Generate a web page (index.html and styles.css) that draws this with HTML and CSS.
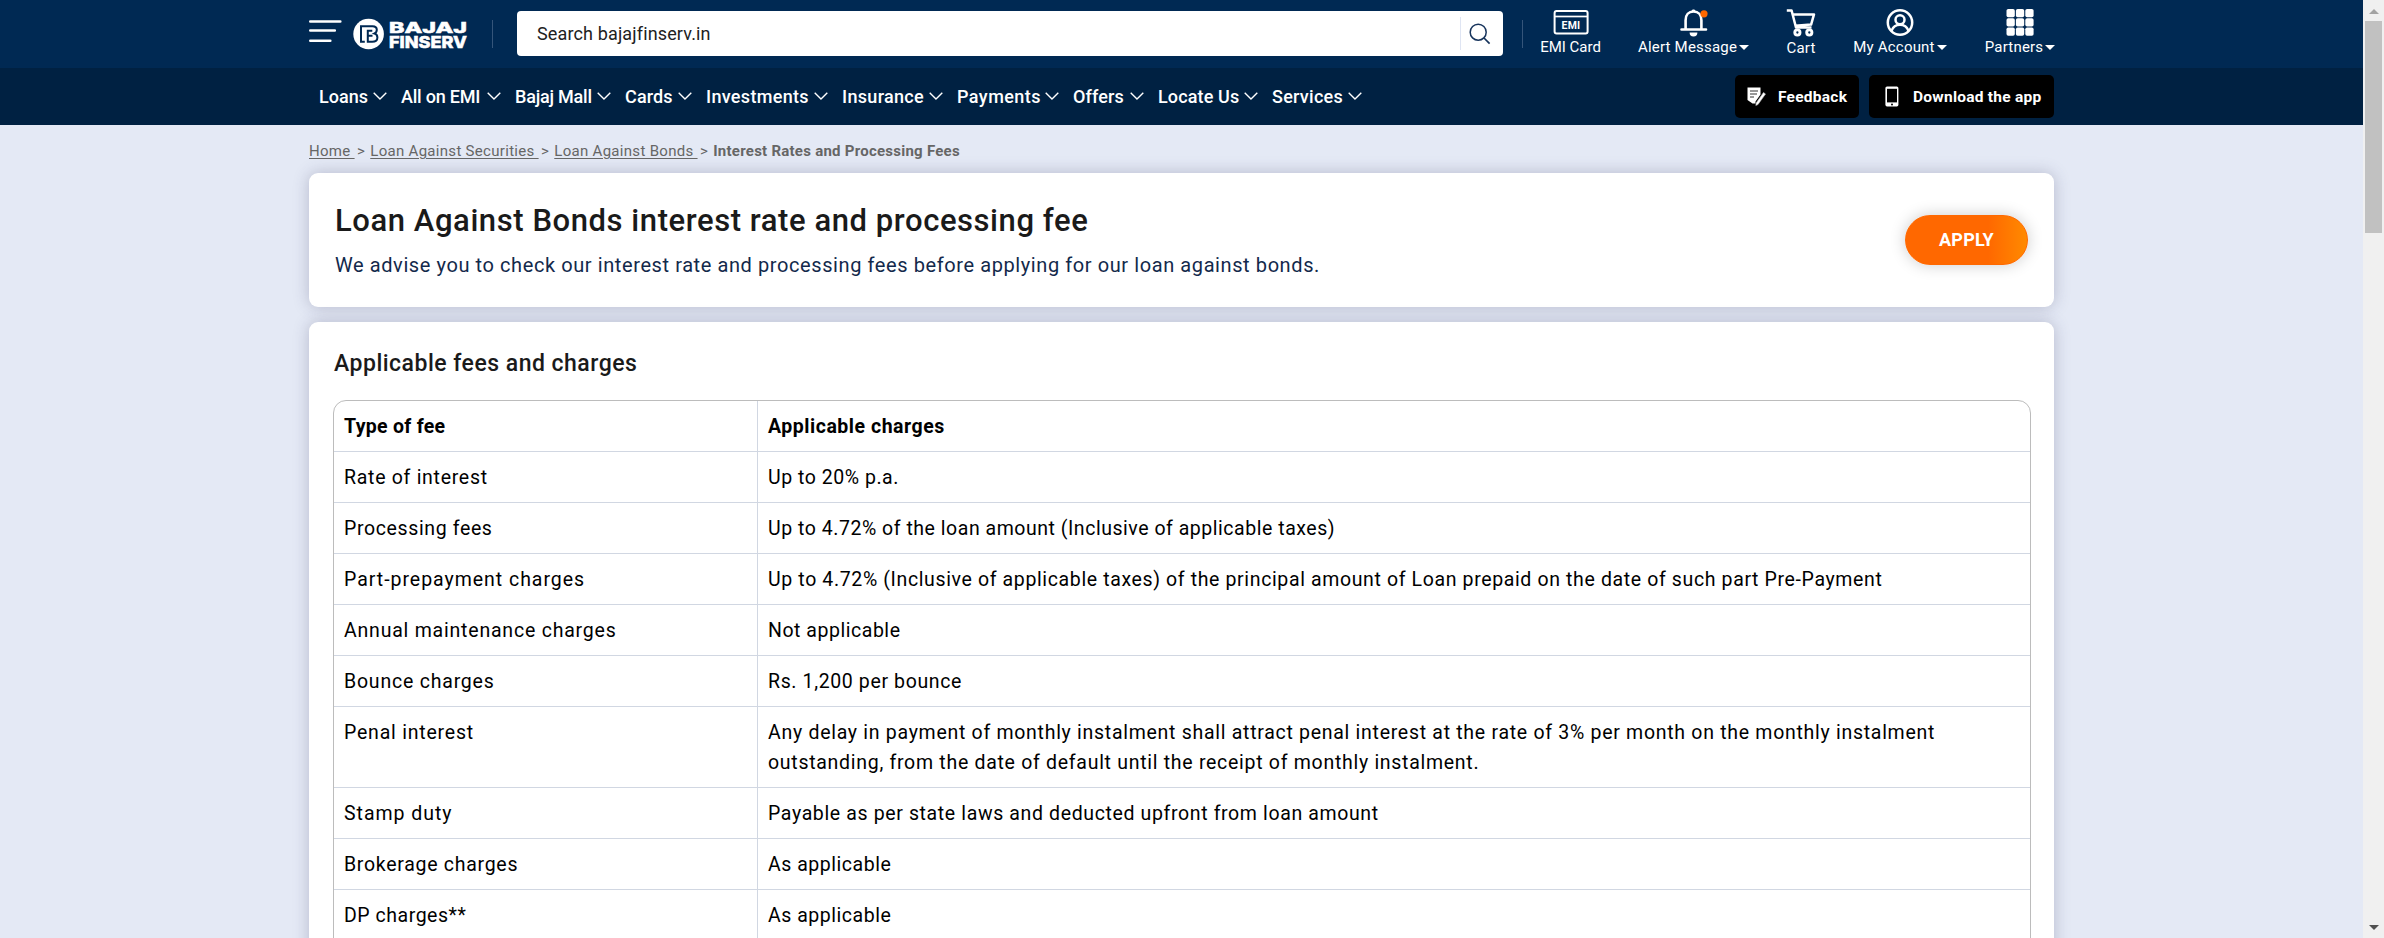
FILE: index.html
```
<!DOCTYPE html>
<html lang="en">
<head>
<meta charset="utf-8">
<title>Loan Against Bonds interest rate and processing fee</title>
<link rel="stylesheet" href="styles.css">
</head>
<body>
<svg width="0" height="0" class="defs"><symbol id="chev" viewBox="0 0 14 8"><path d="M.7.8 7 7 13.3.8" fill="none" stroke="#fff" stroke-width="1.4"/></symbol></svg>
<div class="page">
  <header class="top">
    <div class="wrap top-row">
      <svg class="burger" width="33" height="23" viewBox="0 0 33 23"><path d="M1.3 1.5h30M1.3 10.5h24.5M1.3 20.7h20" stroke="#fff" stroke-width="2.6" stroke-linecap="round"/></svg>
      <svg class="logo" width="116" height="34" viewBox="0 0 116 34">
        <circle cx="15.6" cy="17" r="15.3" fill="#fff"/>
        <path d="M11.800 24.800H8V9.200h11.500c3 0 4.300 1.300 4.300 3.500 0 2-1 3.200-2.300 3.800 1.700.5 2.900 1.900 2.900 4 0 2.800-1.800 4.300-5.200 4.300h-4.400V13.800h4.500M15 18.800h4.500" fill="none" stroke="#002953" stroke-width="2"/>
        <text class="logo-a" x="36" y="15.500" textLength="78" lengthAdjust="spacingAndGlyphs">BAJAJ</text>
        <text class="logo-b" x="36" y="31" textLength="78" lengthAdjust="spacingAndGlyphs">FINSERV</text>
      </svg>
      <i class="rule"></i>
      <div class="search"><span>Search bajajfinserv.in</span><i></i>
        <svg width="22" height="22" viewBox="0 0 22 22"><circle cx="9.200" cy="9.200" r="8" fill="none" stroke="#17345c" stroke-width="1.500"/><path d="m15 15 5.600 5.600" stroke="#17345c" stroke-width="1.700"/></svg>
      </div>
      <i class="rule rule-b"></i>
      <div class="actions">
        <a class="act emi">
          <svg width="36" height="26" viewBox="0 0 36 26"><rect x="1.600" y="2" width="33" height="22.500" rx="2" fill="none" stroke="#fff" stroke-width="2"/><path d="M2 7.500h32" stroke="#fff" stroke-width="1.700"/><text x="18" y="19.800" text-anchor="middle" class="emi-t">EMI</text></svg>
          <span>EMI Card</span></a>
        <a class="act alert">
          <svg width="32" height="28" viewBox="0 0 32 28"><path d="M7.600 19.500v-8.300C7.600 6 10.600 2.500 15.500 2.500s7.900 3.500 7.900 8.700v8.300M3.500 20.500h24.500" fill="none" stroke="#fff" stroke-width="2.600" stroke-linecap="round"/><path d="M13.500 2.500c0-2.600 4-2.600 4 0z" fill="#fff"/><path d="M11.600 23.500h7.800a3.900 3.900 0 0 1-7.800 0z" fill="#fff"/><circle cx="26" cy="4.800" r="3.600" fill="#ff6800"/></svg>
          <span>Alert Message<b class="tri"></b></span></a>
        <a class="act cart">
          <svg width="31" height="28" viewBox="0 0 31 28"><path d="M.8 1.500h4.800l4.400 17h15.500M7 5.400h21l-2.900 10.200-15.700 1.200" fill="none" stroke="#fff" stroke-width="2.500" stroke-linejoin="round"/><circle cx="11.400" cy="23.500" r="2.600" fill="none" stroke="#fff" stroke-width="2.900"/><circle cx="23.300" cy="23.500" r="2.600" fill="none" stroke="#fff" stroke-width="2.900"/></svg>
          <span>Cart</span></a>
        <a class="act acc">
          <svg width="28" height="28" viewBox="0 0 28 28"><g fill="none" stroke="#fff" stroke-width="2.500"><circle cx="14" cy="13.500" r="12.200"/><circle cx="14" cy="10.700" r="4.500"/><path d="M5.500 21.800c1.500-4 4.600-6 8.500-6s7 2 8.500 6"/></g></svg>
          <span>My Account<b class="tri"></b></span></a>
        <a class="act part">
          <svg width="28" height="28" viewBox="0 0 28 28" fill="#fff"><rect x=".5" y="0" width="8.300" height="8.300" rx="1.800"/><rect x="9.900" y="0" width="8.300" height="8.300" rx="1.800"/><rect x="19.300" y="0" width="8.300" height="8.300" rx="1.800"/><rect x=".5" y="9.200" width="8.300" height="8.300" rx="1.800"/><rect x="9.900" y="9.200" width="8.300" height="8.300" rx="1.800"/><rect x="19.300" y="9.200" width="8.300" height="8.300" rx="1.800"/><rect x=".5" y="18.400" width="8.300" height="8.300" rx="1.800"/><rect x="9.900" y="18.400" width="8.300" height="8.300" rx="1.800"/><rect x="19.300" y="18.400" width="8.300" height="8.300" rx="1.800"/></svg>
          <span>Partners<b class="tri"></b></span></a>
      </div>
    </div>
  </header>
  <nav class="nav">
    <div class="wrap nav-row">
      <div class="menu">
        <a>Loans<svg><use href="#chev"/></svg></a>
        <a class="tight">All on EMI<svg><use href="#chev"/></svg></a>
        <a class="tight">Bajaj Mall<svg><use href="#chev"/></svg></a>
        <a class="s1">Cards<svg><use href="#chev"/></svg></a>
        <a class="s3">Investments<svg><use href="#chev"/></svg></a>
        <a class="s3">Insurance<svg><use href="#chev"/></svg></a>
        <a class="s4">Payments<svg><use href="#chev"/></svg></a>
        <a class="s1">Offers<svg><use href="#chev"/></svg></a>
        <a class="s1">Locate Us<svg><use href="#chev"/></svg></a>
        <a class="s2">Services<svg><use href="#chev"/></svg></a>
      </div>
      <a class="btn fb"><svg width="20" height="20" viewBox="0 0 20 20"><path d="M.5.500h13v7l-5 7v2H5.500L.5 13z" fill="#fff"/><path d="M3 4h8M3 7h7M3 10h4" stroke="#333" stroke-width="1.200"/><path d="m16.500 5.500 2 1.500-7.500 10.500-2.200 1 .3-2.500z" fill="#fff" stroke="#bbb" stroke-width=".6"/></svg><span>Feedback</span></a>
      <a class="btn dl"><svg width="14" height="21" viewBox="0 0 14 21"><rect x=".4" y=".4" width="13" height="20" rx="1.600" fill="#fff"/><path d="M2 2.800h10v13.600H2z" fill="#000"/><circle cx="7" cy="18.500" r="1" fill="#000"/></svg><span>Download the app</span></a>
    </div>
  </nav>
  <main class="wrap">
    <div class="crumbs"><a>Home&nbsp;</a><i>&gt;</i><a>Loan Against Securities&nbsp;</a><i>&gt;</i><a>Loan Against Bonds&nbsp;</a><i>&gt;</i><b>Interest Rates and Processing Fees</b></div>
    <section class="card hero">
      <div>
        <h1>Loan Against Bonds interest rate and processing fee</h1>
        <p>We advise you to check our interest rate and processing fees before applying for our loan against bonds.</p>
      </div>
      <a class="apply">APPLY</a>
    </section>
    <section class="card fees">
      <h2>Applicable fees and charges</h2>
      <div class="table">
        <div class="row head"><div class="t3">Type of fee</div><div class="t5">Applicable charges</div></div>
        <div class="row"><div class="t7">Rate of interest</div><div class="t5">Up to 20% p.a.</div></div>
        <div class="row"><div class="t6">Processing fees</div><div class="t5">Up to 4.72% of the loan amount (Inclusive of applicable taxes)</div></div>
        <div class="row"><div class="t9">Part-prepayment charges</div><div class="t6">Up to 4.72% (Inclusive of applicable taxes) of the principal amount of Loan prepaid on the date of such part Pre-Payment</div></div>
        <div class="row"><div class="t8">Annual maintenance charges</div><div class="t5">Not applicable</div></div>
        <div class="row"><div class="t8">Bounce charges</div><div class="t6">Rs. 1,200 per bounce</div></div>
        <div class="row"><div class="t8">Penal interest</div><div class="t7">Any delay in payment of monthly instalment shall attract penal interest at the rate of 3% per month on the monthly instalment<br>outstanding, from the date of default until the receipt of monthly instalment.</div></div>
        <div class="row"><div class="t9">Stamp duty</div><div class="t6">Payable as per state laws and deducted upfront from loan amount</div></div>
        <div class="row"><div class="t7">Brokerage charges</div><div class="t5">As applicable</div></div>
        <div class="row last"><div class="t5">DP charges**</div><div class="t5">As applicable</div></div>
      </div>
    </section>
  </main>
</div>
<aside class="bar"><b class="up"></b><i></i><b class="down"></b></aside>
</body>
</html>
```
FILE: styles.css
```
* { box-sizing: border-box; }
body { margin: 0; height: 938px; overflow: hidden; display: flex; font-family: Roboto, "Noto Sans", sans-serif; background: #e4e9f5; }
.defs { position: absolute; }
i { font-style: normal; }
.page { width: 2363px; height: 938px; overflow: hidden; }
.wrap { width: 1745px; margin: 0 0 0 309px; }

.top { height: 68px; background: #002953; }
.top-row { height: 68px; display: flex; align-items: flex-start; color: #fff; }
.top-row > * { flex-shrink: 0; }
.burger { margin-top: 20px; }
.logo { margin: 17px 0 0 11px; }
.logo text { font-family: Inter, sans-serif; fill: #fff; font-weight: 800; stroke: #fff; stroke-width: .5px; }
.logo-a { font-size: 15px; }
.logo-b { font-size: 16.500px; }
.rule { width: 1px; height: 28px; margin: 20px 0 0 23px; background: #35557a; }
.rule-b { margin-left: 19px; }
.search { width: 986px; height: 45px; margin: 11px 0 0 24px; background: #fff; border-radius: 4px; display: flex; align-items: center; padding: 0 12px 0 20px; }
.search span { flex: 1; color: #212121; font-size: 18px; letter-spacing: .14px; line-height: 46px; }
.search i { width: 1px; height: 33px; background: #dfe5f3; margin-right: 8px; }
.actions { display: flex; margin-left: 17px; gap: 37px; padding-top: 9px; }
.act { display: flex; flex-direction: column; align-items: center; font-size: 15px; white-space: nowrap; letter-spacing: .2px; }
.act span { display: flex; align-items: center; line-height: 20px; margin-top: 1px; }
.emi { width: 61px; letter-spacing: 0; }
.emi span { margin-top: 2px; }
.emi-t { font-size: 10.500px; font-weight: 700; fill: #fff; letter-spacing: .2px; }
.alert { width: 111px; }
.alert span, .acc span, .part span { margin-top: 0; }
.cart { width: 30px; }
.acc { width: 94px; }
.part { width: 72px; }
.tri { border: 5px solid transparent; border-top-color: #fff; border-bottom: 0; margin-left: 2px; }

.nav { height: 57px; background: #002142; }
.nav-row { height: 57px; display: flex; align-items: center; color: #fff; padding-left: 10px; }
.menu { display: grid; grid-template-columns: 82px 114px 110px 81px 136px 115px 116px 85px 114px 104px; margin-right: auto; font-size: 18px; font-weight: 500; }
.menu a { display: flex; align-items: center; justify-content: space-between; padding-right: 14px; line-height: 28px; white-space: nowrap; }
.menu svg { width: 14px; height: 8px; margin-bottom: 2px; }
.tight { letter-spacing: -.21px; }
.s1 { letter-spacing: .13px; }
.s2 { letter-spacing: .27px; }
.s3 { letter-spacing: .31px; }
.s4 { letter-spacing: .45px; }
.btn { height: 43px; background: #000; border-radius: 5px; font-size: 15.500px; font-weight: 700; letter-spacing: .25px; display: flex; align-items: center; white-space: nowrap; }
.fb { width: 124px; padding-left: 12px; margin-right: 10px; gap: 11px; }
.dl { width: 185px; padding-left: 16px; gap: 14px; }

.crumbs { height: 48px; display: flex; padding-top: 16px; color: #666; font-size: 15px; line-height: 20px; letter-spacing: .3px; white-space: nowrap; }
.crumbs a { text-decoration: underline; text-underline-offset: 2px; }
.crumbs i { margin: 0 5px 0 2.500px; }
.crumbs b { letter-spacing: .25px; }
.card { background: #fff; border-radius: 9px; box-shadow: 0 0 16px rgba(60, 60, 100, .28); }
.hero { height: 134px; display: flex; justify-content: space-between; align-items: center; padding: 0 26px; }
h1, h2, p { margin: 0; }
h1 { font-size: 31px; line-height: 40px; font-weight: 500; letter-spacing: .57px; color: #1a1a1a; margin-top: 1px; }
.hero p { font-size: 20px; line-height: 30px; letter-spacing: .59px; color: #13294b; margin-top: 9px; }
.apply { width: 123px; height: 50px; border: 1px solid #ff6800; border-radius: 25px; background: linear-gradient(90deg, #ff6800 68%, #ff8a00 100%); color: #fff; font-size: 18px; font-weight: 700; letter-spacing: .2px; line-height: 48px; text-align: center; box-shadow: 0 0 16px rgba(0, 0, 0, .2); }
.fees { height: 900px; margin-top: 15px; padding: 27px 23px 0 24px; }
h2 { font-size: 23px; line-height: 30px; font-weight: 500; letter-spacing: .49px; color: #1a1a1a; margin: 0 0 21px 1px; }
.table { border: 1px solid #bcbcbc; border-radius: 13px; overflow: hidden; }
.row { display: grid; grid-template-columns: 423px 1fr; border-bottom: 1px solid #d1d7e2; font-size: 19.500px; line-height: 30px; color: #000; }
.row > div { padding: 11px 0 9px 10px; white-space: nowrap; }
.row > div + div { border-left: 1px solid #d1d7e2; }
.head { font-weight: 700; }
.last { min-height: 100px; }
.t3 { letter-spacing: .3px; }
.t4 { letter-spacing: .42px; }
.t5 { letter-spacing: .53px; }
.t6 { letter-spacing: .63px; }
.t7 { letter-spacing: .715px; }
.t8 { letter-spacing: .79px; }
.t9 { letter-spacing: .97px; }

.bar { width: 21px; height: 938px; background: #f0f0f0; display: flex; flex-direction: column; align-items: center; padding: 9px 0 8px; }
.bar i { width: 17px; height: 212px; margin: 7px 0 auto; background: #c1c1c1; }
.up, .down { border: 5px solid transparent; }
.up { border-bottom-color: #a3a3a3; border-top: 0; }
.down { border-top-color: #505050; border-bottom: 0; }
```
